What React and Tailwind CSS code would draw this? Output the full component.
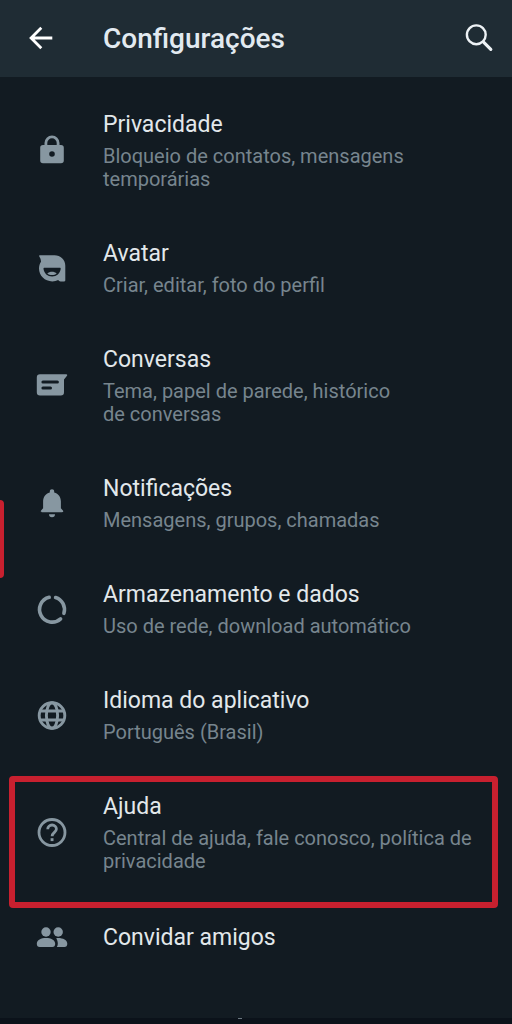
const Icon = ({ children, className = "size-8" }) => (
  <svg viewBox="0 0 32 32" className={className} fill="currentColor" aria-hidden="true">
    {children}
  </svg>
);

const LockIcon = () => (
  <Icon>
    <path
      fillRule="evenodd"
      d="M7 10h1.500V8a7.500 7.500 0 0 1 15 0v2H25a2.800 2.800 0 0 1 2.800 2.800v12.700a2.800 2.800 0 0 1-2.800 2.800H7a2.800 2.800 0 0 1-2.800-2.800V12.800A2.800 2.800 0 0 1 7 10Zm4.300 0h9.400V8a4.700 4.700 0 0 0-9.400 0v2Zm4.700 6.200a2.800 2.800 0 1 0 0 5.600 2.800 2.800 0 0 0 0-5.600Z"
    />
  </Icon>
);

const AvatarIcon = () => (
  <Icon>
    <path
      fillRule="evenodd"
      d="M4 2.200h14.500c6 0 10.800 4.500 10.800 10.500v14.500c0 .8-.5 1.200-1.200 1.200h-3.600c-1 0-1.800-.4-2.300-1.300-1.700.9-3.700 1.300-5.900 1.300C8.800 28.400 3 22.800 3 15.600c0-2.500.6-4.800 2-6.800C4.900 6.500 4.300 5 3.300 3.500c-.5-.7-.1-1.300.7-1.300ZM8.500 14.700c-.7 0-1.100.5-1 1.200.7 4.500 4 7.500 8.600 7.500s7.900-3 8.600-7.500c.1-.7-.3-1.200-1-1.200H8.500Z"
    />
    <path d="M11.300 20.500c2.400-2.400 7-2.400 9.400 0-2.500 2.100-6.900 2.100-9.400 0Z" />
  </Icon>
);

const ChatIcon = () => (
  <Icon>
    <path
      fillRule="evenodd"
      d="M4 4.300h26.300c.9 0 1.200.8.700 1.500l-3 3.800v12.600a3.200 3.200 0 0 1-3.200 3.200H4a3.200 3.200 0 0 1-3.200-3.200V7.500A3.200 3.200 0 0 1 4 4.300Zm2.900 6.200a1.500 1.500 0 0 0 0 3h14.500a1.500 1.500 0 0 0 0-3H6.900Zm0 6a1.500 1.500 0 0 0 0 3h7.600a1.500 1.500 0 0 0 0-3H6.900Z"
    />
  </Icon>
);

const BellIcon = () => (
  <Icon>
    <path d="M16 1.200c1.300 0 2.200.9 2.200 2.200v1.100c4.300 1.100 6.700 4.600 6.700 9v6.700l2 2.200c.8.900.3 1.800-.8 1.800H5.900c-1.100 0-1.600-.9-.8-1.800l2-2.200v-6.700c0-4.400 2.400-7.900 6.700-9V3.400c0-1.300.9-2.200 2.200-2.200ZM13 26.200h6a3 3 0 0 1-6 0Z" />
  </Icon>
);

const DataIcon = () => (
  <Icon>
    <g fill="none" stroke="currentColor" strokeWidth="3.600" strokeLinecap="round">
      <path d="M13.200 3.300A12.600 12.600 0 1 0 24.600 24.900" />
      <path d="M19.600 3.500A12.600 12.600 0 0 1 27.900 19.300" />
    </g>
  </Icon>
);

const GlobeIcon = () => (
  <Icon>
    <g fill="none" stroke="currentColor" strokeWidth="2.900">
      <circle cx="16" cy="15.500" r="12.800" />
      <ellipse cx="16" cy="15.500" rx="5.600" ry="12.800" />
      <path d="M4.500 11h23M4.500 20h23" />
    </g>
  </Icon>
);

const HelpIcon = () => (
  <Icon>
    <g fill="none" stroke="currentColor" strokeWidth="2.800">
      <circle cx="16" cy="15.500" r="13" />
      <path d="M11.700 12.300c0-2.500 2-4.300 4.400-4.300s4.300 1.800 4.300 4.100c0 3.200-4.300 3.500-4.300 7.200" />
    </g>
    <rect x="14.600" y="21.200" width="2.900" height="2.900" />
  </Icon>
);

const PeopleIcon = () => (
  <Icon>
    <circle cx="10" cy="10" r="4.700" />
    <circle cx="22.200" cy="10" r="4.700" />
    <path d="M.8 21.800c0-3.700 4.300-5.700 9.200-5.700s9.200 2 9.200 5.700c0 2-1 3.300-2.900 3.300H3.700c-1.900 0-2.900-1.300-2.900-3.300Z" />
    <path d="M20.200 16.200c5.800-.6 11.100 1.600 11.100 5.600 0 2-1 3.300-2.900 3.300h-7.600c.7-.9 1-2 1-3.300 0-2.400-.6-4-1.600-5.600Z" />
  </Icon>
);

const items = [
  {
    title: "Privacidade",
    description: "Bloqueio de contatos, mensagens\ntemporárias",
    icon: LockIcon,
  },
  { title: "Avatar", description: "Criar, editar, foto do perfil", icon: AvatarIcon },
  {
    title: "Conversas",
    description: "Tema, papel de parede, histórico\nde conversas",
    icon: ChatIcon,
  },
  {
    title: "Notificações",
    description: "Mensagens, grupos, chamadas",
    icon: BellIcon,
    marked: true,
  },
  {
    title: "Armazenamento e dados",
    description: "Uso de rede, download automático",
    icon: DataIcon,
  },
  { title: "Idioma do aplicativo", description: "Português (Brasil)", icon: GlobeIcon },
  {
    title: "Ajuda",
    description: "Central de ajuda, fale conosco, política de privacidade",
    icon: HelpIcon,
    highlighted: true,
  },
  { title: "Convidar amigos", icon: PeopleIcon },
];

function SettingsItem({ title, description, icon: ItemIcon, marked, highlighted }) {
  return (
    <li className="relative">
      <button type="button" className="flex w-full items-center pt-[25px] pb-6 text-left">
        <span className="flex w-[103px] shrink-0 justify-center text-[#8797a1]">
          <ItemIcon />
        </span>
        <span className="flex grow flex-col gap-1.5 pr-8">
          <span className="text-[23px] leading-7 text-[#e2e8eb]">{title}</span>
          {description && (
            <span className="whitespace-pre-line text-[20px] leading-[23px] text-[#77858e]">
              {description}
            </span>
          )}
        </span>
      </button>

      {marked && (
        <span className="absolute top-[50px] left-0 h-[78px] w-1 rounded-r-sm bg-[#c8202f]" />
      )}
      {highlighted && (
        <span className="pointer-events-none absolute top-2 right-3.5 -bottom-[11px] left-[9px] rounded-sm border-6 border-[#c8202f]" />
      )}
    </li>
  );
}

export default function App() {
  return (
    <div className="flex min-h-screen flex-col bg-[#121b22] font-[Roboto,sans-serif]">
      <header className="flex h-[77px] items-center bg-[#1f2c34] pr-4">
        <button
          type="button"
          aria-label="Voltar"
          className="flex w-[103px] shrink-0 items-center pl-6 text-white"
        >
          <Icon>
            <path
              d="M28.300 15H7.500M17.300 4.800 7.100 15l10.200 10.200"
              fill="none"
              stroke="currentColor"
              strokeWidth="2.800"
            />
          </Icon>
        </button>
        <h1 className="grow text-[28px] leading-9 font-medium text-[#e2eaf0]">Configurações</h1>
        <button type="button" aria-label="Pesquisar" className="text-[#edf2f5]">
          <Icon>
            <g fill="none" stroke="currentColor" strokeLinecap="round">
              <circle cx="12.300" cy="11.800" r="9.400" strokeWidth="2.400" />
              <path d="m19.800 19.300 7 7" strokeWidth="3.200" />
            </g>
          </Icon>
        </button>
      </header>

      <main className="grow pt-[9px]">
        <ul>
          {items.map((item) => (
            <SettingsItem key={item.title} {...item} />
          ))}
        </ul>
      </main>

      <footer className="flex h-1.5 justify-center bg-[#0b121a] pr-8">
        <span className="h-px w-1 bg-[#6b7780]" />
      </footer>
    </div>
  );
}
